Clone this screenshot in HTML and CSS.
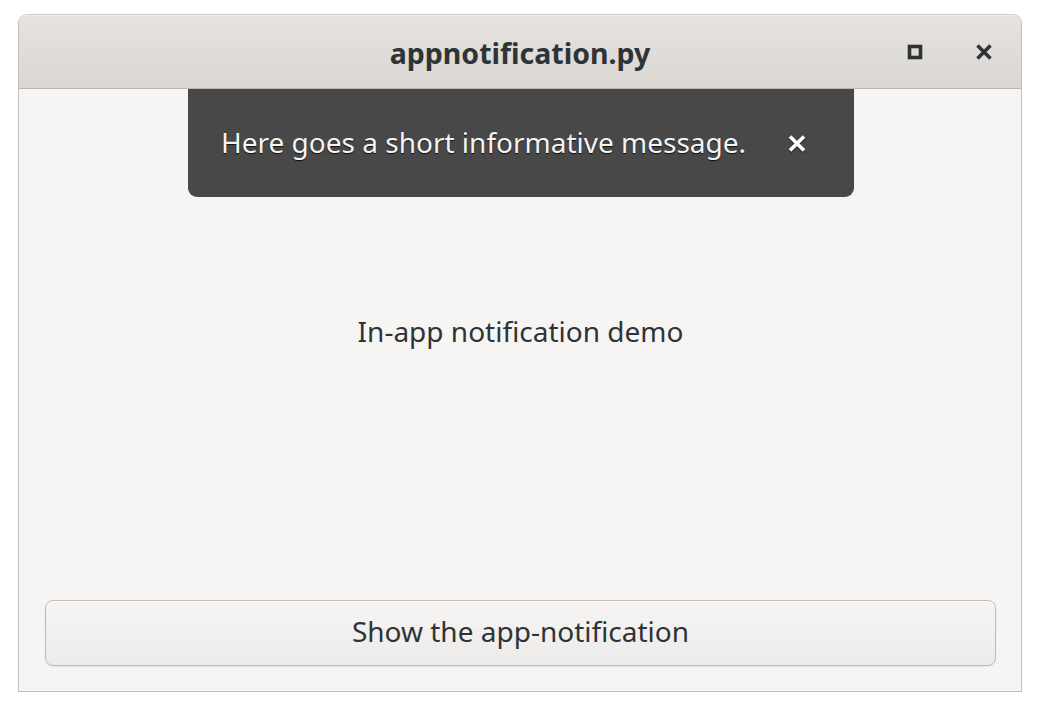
FILE: index.html
```html
<!DOCTYPE html>
<html lang="en">
<head>
<meta charset="utf-8">
<title>appnotification.py</title>
<link rel="stylesheet" href="styles.css">
</head>
<body>
<div class="window">
  <header class="titlebar">
    <div class="title">appnotification.py</div>
    <div class="controls">
      <button class="wbtn" aria-label="Maximize">
        <svg width="16" height="16" viewBox="0 0 16 16"><rect x="2.5" y="2.5" width="11" height="11" fill="none" stroke="#2e3436" stroke-width="3.6"/></svg>
      </button>
      <button class="wbtn" aria-label="Close">
        <svg width="18" height="18" viewBox="0 0 18 18"><path d="M2.5 2.5 L15.5 15.5 M15.5 2.5 L2.5 15.5" stroke="#2e3436" stroke-width="3.6" stroke-linecap="butt"/></svg>
      </button>
    </div>
  </header>
  <main class="content">
    <div class="toast">
      <span class="toast-text">Here goes a short informative message.</span>
      <button class="toast-close" aria-label="Close notification">
        <svg width="20" height="20" viewBox="0 0 20 20"><path d="M3 4 L17 18 M17 4 L3 18" stroke="#1a1a1a" stroke-opacity="0.7" stroke-width="3.6"/><path d="M3 2.5 L17 16.5 M17 2.5 L3 16.5" stroke="#ffffff" stroke-width="3.6"/></svg>
      </button>
    </div>
    <div class="label-area">
      <span class="label">In-app notification demo</span>
    </div>
    <button class="action">Show the app-notification</button>
  </main>
</div>
</body>
</html>
```
FILE: styles.css
```css
html, body {
  margin: 0;
  padding: 0;
  background: #ffffff;
}
body {
  padding: 14px 0 0 18px;
  font-family: "Noto Sans", "DejaVu Sans", sans-serif;
  color: #2e3436;
}
.window {
  width: 1002px;
  height: 676px;
  border: 1px solid #c4c0bc;
  border-top-color: #cfcbc7;
  border-radius: 9px 9px 0 0;
  display: flex;
  flex-direction: column;
  overflow: hidden;
  background: #f6f5f4;
}
.titlebar {
  height: 73px;
  flex: none;
  position: relative;
  display: flex;
  align-items: center;
  justify-content: center;
  background: linear-gradient(#e6e3e0, #dad6d2);
  box-shadow: inset 0 1px 0 #efedeb;
  border-bottom: 1px solid #bdb6b0;
}
.title {
  font-weight: 700;
  font-size: 28.5px;
  color: #2e3436;
  padding-top: 3px;
}
.controls {
  position: absolute;
  right: 27px;
  top: 0;
  bottom: 0;
  display: flex;
  align-items: center;
  gap: 49px;
}
.wbtn {
  border: 0;
  background: none;
  padding: 0;
  width: 20px;
  height: 20px;
  display: flex;
  align-items: center;
  justify-content: center;
}
.content {
  flex: 1;
  position: relative;
  display: flex;
  flex-direction: column;
  padding: 0 25px 25px 26px;
}
.toast {
  position: absolute;
  left: 169px;
  top: 0;
  width: 666px;
  height: 108px;
  box-sizing: border-box;
  background: #484848;
  border-radius: 0 0 9px 9px;
  display: flex;
  align-items: center;
  padding: 0 47px 0 33px;
  justify-content: space-between;
}
.toast-text {
  color: #f4f4f4;
  font-size: 28px;
  text-shadow: 0 1px 1px rgba(0,0,0,0.8);
  margin-top: -2px;
}
.toast-close {
  border: 0;
  background: none;
  padding: 0;
  width: 20px;
  height: 20px;
  margin-top: 2px;
}
.label-area {
  flex: 1;
  display: flex;
  align-items: center;
  justify-content: center;
}
.label {
  font-size: 28px;
  color: #2e3436;
}
.action {
  flex: none;
  margin-top: 27px;
  height: 66px;
  border: 1px solid #c0bab4;
  border-radius: 8px;
  background: linear-gradient(#f6f5f4, #edebe9);
  box-shadow: inset 0 1px 0 #ffffff, 0 1px 2px rgba(0,0,0,0.07);
  font-family: inherit;
  font-size: 28px;
  color: #2e3436;
  padding: 0 0 5px;
}
```
